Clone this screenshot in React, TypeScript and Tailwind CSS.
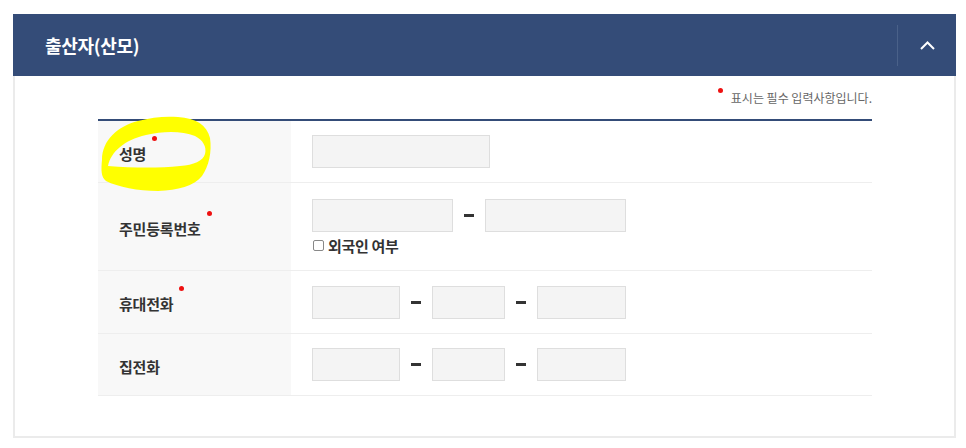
import React from "react"

const FONT = "font-['Noto_Sans_CJK_KR','Noto_Sans',sans-serif]"

function Dot() {
  return <span className="absolute -top-[8px] -right-[11px] w-[5px] h-[5px] rounded-full bg-[#ee1111]" />
}

function Label({ text, required }: { text: string; required?: boolean }) {
  return (
    <div className="w-[193px] shrink-0 bg-[#f8f8f8] pl-[21px] pt-1 flex items-center">
      <span className="relative text-[15px] font-bold tracking-[-0.2px] text-[#333] leading-[20px]">
        {text}
        {required && <Dot />}
      </span>
    </div>
  )
}

function Field({ w }: { w: string }) {
  return <input type="text" className={`${w} h-[33px] border border-[#dedede] bg-[#f4f4f4] outline-none`} />
}

function Dash() {
  return <span className="w-[10px] h-[3px] bg-[#333] mx-[11px]" />
}

function PhoneFields() {
  return (
    <div className="flex items-center">
      <input type="text" className="w-[88px] h-[33px] border border-[#dedede] bg-[#f4f4f4] outline-none" />
      <Dash />
      <input type="text" className="w-[73px] h-[33px] border border-[#dedede] bg-[#f4f4f4] outline-none" />
      <Dash />
      <input type="text" className="w-[89px] h-[33px] border border-[#dedede] bg-[#f4f4f4] outline-none" />
    </div>
  )
}

export default function App() {
  return (
    <div className={`relative w-[966px] h-[448px] bg-white overflow-hidden ${FONT}`}>
      <div className="pt-[14px] pl-[13px]">
        <div className="w-[943px]">
          {/* Header */}
          <div className="h-[62px] bg-[#344c78] flex items-center justify-between pl-[32px]">
            <h2 className="text-[18px] font-bold text-white tracking-[-0.3px]">출산자(산모)</h2>
            <button className="h-[41px] w-[59px] border-l border-[#4a6189] flex items-center justify-center">
              <svg width="15" height="9" viewBox="0 0 15 9" fill="none">
                <polyline points="1,8 7.5,1.5 14,8" stroke="white" strokeWidth="2" />
              </svg>
            </button>
          </div>

          {/* Body */}
          <div className="h-[362px] border-x-2 border-b-2 border-[#ebebeb] pl-[83px]">
            <div className="w-[774px] h-[43px] flex items-center justify-end">
              <span className="relative text-[12px] tracking-normal text-[#666]">
                <span className="absolute -left-[13px] -top-[1px] w-[5px] h-[5px] rounded-full bg-[#ee1111]" />
                표시는 필수 입력사항입니다.
              </span>
            </div>

            <div className="w-[774px] border-t-2 border-[#344c78]">
              <div className="flex h-[62px] border-b border-[#eeeeee]">
                <Label text="성명" required />
                <div className="pl-[21px] flex items-center">
                  <Field w="w-[178px]" />
                </div>
              </div>

              <div className="flex h-[88px] border-b border-[#eeeeee]">
                <Label text="주민등록번호" required />
                <div className="pl-[21px] flex flex-col justify-center">
                  <div className="flex items-center">
                    <Field w="w-[141px]" />
                    <Dash />
                    <Field w="w-[141px]" />
                  </div>
                  <label className="mt-[5px] flex items-center gap-[4px] text-[15px] font-bold tracking-[-0.3px] text-[#333] leading-[18px]">
                    <span className="ml-[1px] w-[11px] h-[11px] rounded-[2px] border border-[#888] bg-white" />
                    외국인 여부
                  </label>
                </div>
              </div>

              <div className="flex h-[63px] border-b border-[#eeeeee]">
                <Label text="휴대전화" required />
                <div className="pl-[21px] flex items-center">
                  <PhoneFields />
                </div>
              </div>

              <div className="flex h-[62px] border-b border-[#eeeeee]">
                <Label text="집전화" />
                <div className="pl-[21px] flex items-center">
                  <PhoneFields />
                </div>
              </div>
            </div>
          </div>
        </div>
      </div>

      {/* yellow highlight marker */}
      <svg className="absolute left-0 top-0 pointer-events-none" width="966" height="448" viewBox="0 0 966 448">
        <path
          fillRule="evenodd"
          fill="#ffff00"
          d="M102,160 C102,140 118,126 138,121 C152,117 166,116 178,117 C196,118 207,125 210,138 C212,152 209,166 202,176 C194,186 178,190 158,191 C138,191 118,187 106,181 C101,177 101,170 102,160 Z
             M108,166 C111,152 124,140 146,135 C164,131 182,131 195,136 C203,140 207,147 205,154 C203,161 194,165 180,166 C160,168 135,168 108,166 Z"
        />
      </svg>
    </div>
  )
}
